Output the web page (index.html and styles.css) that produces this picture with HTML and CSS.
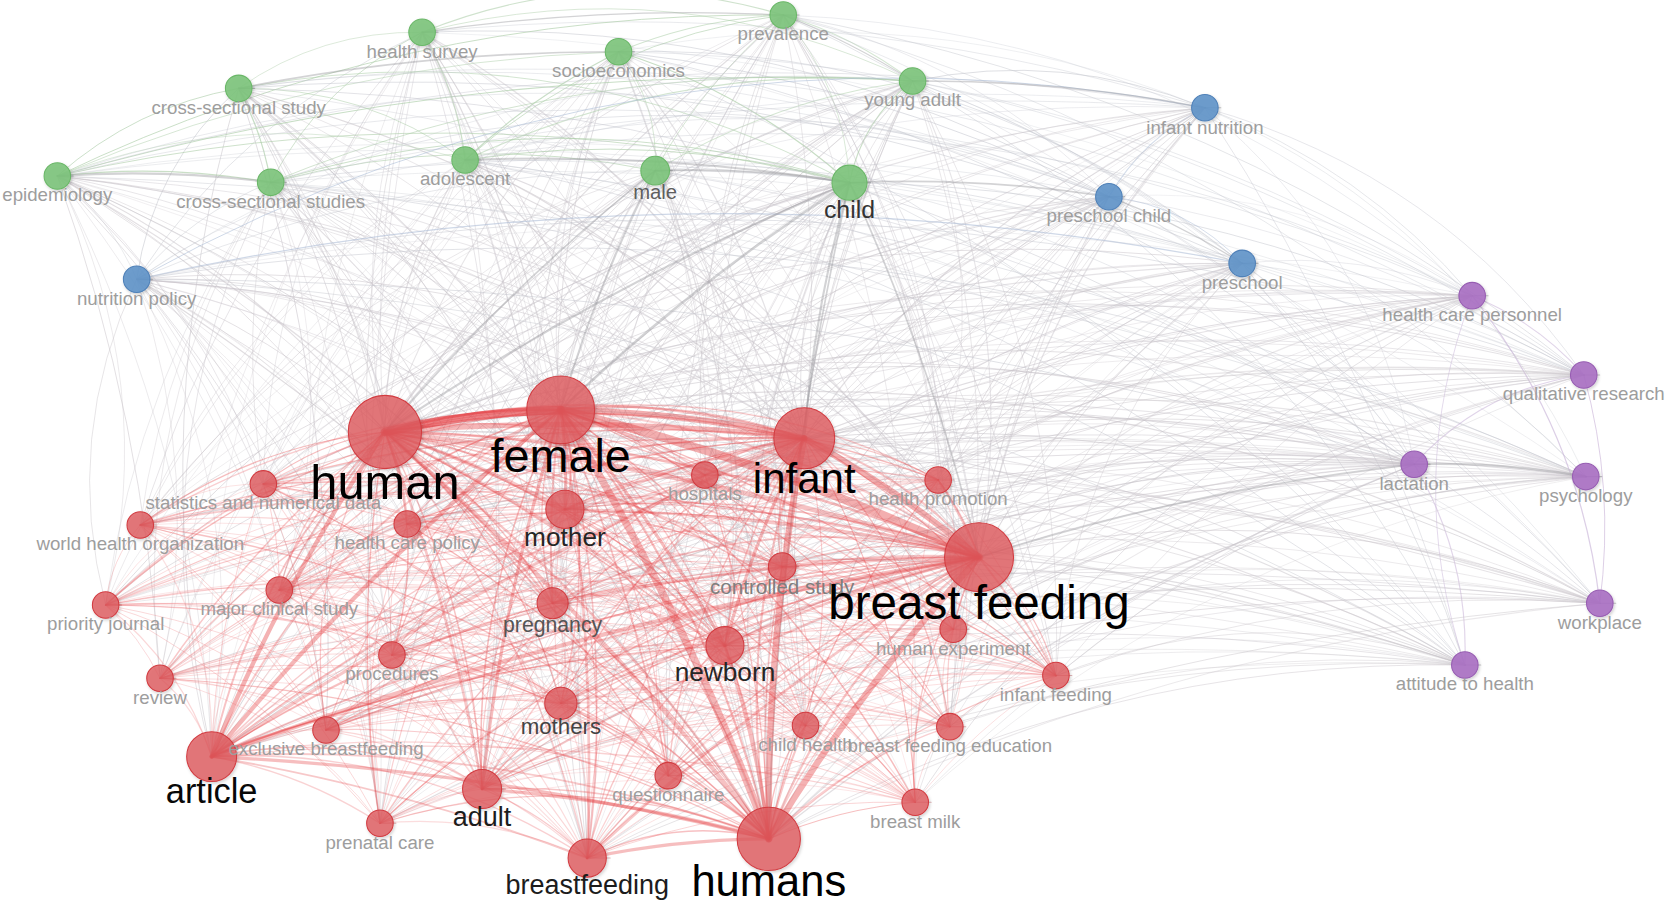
FILE: index.html
```html
<!DOCTYPE html>
<html lang="en">
<head>
<meta charset="utf-8">
<title>Co-occurrence network</title>
<link rel="stylesheet" href="styles.css">
</head>
<body>
<svg class="canvas" id="net" viewBox="0 0 1568 847.5" width="1665" height="900" xmlns="http://www.w3.org/2000/svg">
  <defs>
    <filter id="sh" x="-30%" y="-30%" width="160%" height="160%">
      <feDropShadow dx="1" dy="1.5" stdDeviation="1.4" flood-color="#000" flood-opacity="0.2"/>
    </filter>
  </defs>
  <g class="edges gray" id="e-gray"></g>
  <g class="edges red" id="e-red"></g>
  <g class="edges thick" id="e-thick"></g>
  <g id="nodes">
    <circle class="node g" data-id="hsurvey" data-c="g" cx="397.5" cy="30.4" r="12.5"/>
    <circle class="node g" data-id="prevalence" data-c="g" cx="737.6" cy="14.1" r="12.5"/>
    <circle class="node g" data-id="socio" data-c="g" cx="582.5" cy="48.7" r="12.5"/>
    <circle class="node g" data-id="cssy" data-c="g" cx="224.8" cy="83.2" r="12.5"/>
    <circle class="node g" data-id="yadult" data-c="g" cx="859.4" cy="76.3" r="12.5"/>
    <circle class="node g" data-id="epi" data-c="g" cx="54" cy="165.7" r="12.5"/>
    <circle class="node g" data-id="cssies" data-c="g" cx="254.9" cy="171.7" r="12.5"/>
    <circle class="node g" data-id="adolescent" data-c="g" cx="438" cy="150.7" r="12.5"/>
    <circle class="node g" data-id="male" data-c="g" cx="617" cy="160.7" r="13.5"/>
    <circle class="node g" data-id="child" data-c="g" cx="800" cy="172" r="16.5"/>

    <circle class="node b" data-id="infnut" data-c="b" cx="1134.7" cy="101.4" r="12.5"/>
    <circle class="node b" data-id="prechild" data-c="b" cx="1044.3" cy="185.2" r="12.5"/>
    <circle class="node b" data-id="preschool" data-c="b" cx="1169.8" cy="248" r="12.5"/>
    <circle class="node b" data-id="nutpol" data-c="b" cx="128.7" cy="263" r="12.5"/>

    <circle class="node p" data-id="hcpers" data-c="p" cx="1386.4" cy="278.4" r="12.5"/>
    <circle class="node p" data-id="qual" data-c="p" cx="1491.5" cy="353.1" r="12.5"/>
    <circle class="node p" data-id="lact" data-c="p" cx="1331.8" cy="437.2" r="12.5"/>
    <circle class="node p" data-id="psych" data-c="p" cx="1493.4" cy="448.8" r="12.5"/>
    <circle class="node p" data-id="work" data-c="p" cx="1506.6" cy="568.1" r="12.5"/>
    <circle class="node p" data-id="attit" data-c="p" cx="1379.5" cy="626.2" r="12.5"/>

    <circle class="node r" data-id="statdata" data-c="r" cx="248" cy="455.7" r="12.5"/>
    <circle class="node r" data-id="hcpol" data-c="r" cx="383.5" cy="493.4" r="12.5"/>
    <circle class="node r" data-id="who" data-c="r" cx="132.1" cy="494.4" r="12.5"/>
    <circle class="node r" data-id="mcs" data-c="r" cx="263" cy="555.6" r="12.5"/>
    <circle class="node r" data-id="pj" data-c="r" cx="99.5" cy="569.7" r="12.5"/>
    <circle class="node r" data-id="proc" data-c="r" cx="369.1" cy="616.8" r="12.5"/>
    <circle class="node r" data-id="review" data-c="r" cx="150.7" cy="638.7" r="12.5"/>
    <circle class="node r" data-id="hexp" data-c="r" cx="897.7" cy="592.6" r="12.5"/>
    <circle class="node r" data-id="inffeed" data-c="r" cx="994.4" cy="636.2" r="12.5"/>
    <circle class="node r" data-id="exbf" data-c="r" cx="307" cy="687.4" r="12.5"/>
    <circle class="node r" data-id="chealth" data-c="r" cx="758.6" cy="683.3" r="12.5"/>
    <circle class="node r" data-id="bfedu" data-c="r" cx="894.5" cy="684.3" r="12.5"/>
    <circle class="node r" data-id="quest" data-c="r" cx="629.3" cy="730.4" r="12.5"/>
    <circle class="node r" data-id="prenatal" data-c="r" cx="357.8" cy="775.3" r="12.5"/>
    <circle class="node r" data-id="bmilk" data-c="r" cx="861.9" cy="755.5" r="12.5"/>
    <circle class="node r" data-id="hospitals" data-c="r" cx="663.8" cy="447.3" r="12.5"/>
    <circle class="node r" data-id="hpromo" data-c="r" cx="883.5" cy="452" r="12.5"/>
    <circle class="node r" data-id="cstudy" data-c="r" cx="736.6" cy="533.6" r="13"/>
    <circle class="node r" data-id="pregnancy" data-c="r" cx="520.4" cy="568" r="14.6"/>
    <circle class="node r" data-id="mothers" data-c="r" cx="528.2" cy="662.3" r="15.2"/>
    <circle class="node r" data-id="bfeeding" data-c="r" cx="553" cy="808" r="18"/>
    <circle class="node r" data-id="newborn" data-c="r" cx="682.7" cy="608" r="17.9"/>
    <circle class="node r" data-id="mother" data-c="r" cx="532" cy="479.6" r="18"/>
    <circle class="node r" data-id="adult" data-c="r" cx="454" cy="743" r="18.4"/>
    <circle class="node r" data-id="article" data-c="r" cx="199.3" cy="712.5" r="23.5"/>
    <circle class="node r" data-id="humans" data-c="r" cx="724" cy="790" r="29.8"/>
    <circle class="node r" data-id="infant" data-c="r" cx="757.4" cy="412.7" r="28.7"/>
    <circle class="node r" data-id="female" data-c="r" cx="528" cy="386" r="32"/>
    <circle class="node r" data-id="bf" data-c="r" cx="922" cy="524.8" r="32.5"/>
    <circle class="node r" data-id="human" data-c="r" cx="362.5" cy="406.8" r="34.5"/>
  </g>
  <g class="labels">
    <text class="lb s" x="397.5" y="54.3">health survey</text>
    <text class="lb s" x="737.6" y="38">prevalence</text>
    <text class="lb s" x="582.5" y="72.6">socioeconomics</text>
    <text class="lb s" x="224.8" y="107.1">cross-sectional study</text>
    <text class="lb s" x="859.4" y="100.2">young adult</text>
    <text class="lb s" x="54" y="189.6">epidemiology</text>
    <text class="lb s" x="254.9" y="195.6">cross-sectional studies</text>
    <text class="lb s" x="438" y="174.6">adolescent</text>
    <text class="lb m1" x="617" y="187.5">male</text>
    <text class="lb m4" x="800" y="205">child</text>

    <text class="lb s" x="1134.7" y="125.8">infant nutrition</text>
    <text class="lb s" x="1044.3" y="209.1">preschool child</text>
    <text class="lb s" x="1169.8" y="272">preschool</text>
    <text class="lb s" x="128.7" y="286.9">nutrition policy</text>

    <text class="lb s" x="1386.4" y="302.3">health care personnel</text>
    <text class="lb s" x="1491.5" y="377">qualitative research</text>
    <text class="lb s" x="1331.8" y="461.1">lactation</text>
    <text class="lb s" x="1493.4" y="472.7">psychology</text>
    <text class="lb s" x="1506.6" y="592">workplace</text>
    <text class="lb s" x="1379.5" y="650.1">attitude to health</text>

    <text class="lb s" x="248" y="479.6">statistics and numerical data</text>
    <text class="lb s" x="383.5" y="517.3">health care policy</text>
    <text class="lb s" x="132.1" y="518.3">world health organization</text>
    <text class="lb s" x="263" y="579.5">major clinical study</text>
    <text class="lb s" x="99.5" y="593.6">priority journal</text>
    <text class="lb s" x="369.1" y="640.7">procedures</text>
    <text class="lb s" x="150.7" y="662.6">review</text>
    <text class="lb s" x="897.7" y="616.5">human experiment</text>
    <text class="lb s" x="994.4" y="660.1">infant feeding</text>
    <text class="lb s" x="307" y="711.3">exclusive breastfeeding</text>
    <text class="lb s" x="758.6" y="707.2">child health</text>
    <text class="lb s" x="894.5" y="708.2">breast feeding education</text>
    <text class="lb s" x="629.3" y="754.3">questionnaire</text>
    <text class="lb s" x="357.8" y="799.2">prenatal care</text>
    <text class="lb s" x="861.9" y="779.4">breast milk</text>
    <text class="lb s" x="663.8" y="471.2">hospitals</text>
    <text class="lb s" x="883.5" y="475.9">health promotion</text>
    <text class="lb s2" x="736.6" y="559">controlled study</text>
    <text class="lb m2" x="520.4" y="595.5">pregnancy</text>
    <text class="lb m3" x="528.2" y="690.8">mothers</text>
    <text class="lb m6" x="553" y="842">breastfeeding</text>
    <text class="lb m5" x="682.7" y="641.3">newborn</text>
    <text class="lb m5" x="532" y="514.5">mother</text>
    <text class="lb m6" x="454" y="778">adult</text>
    <text class="lb l1" x="199.3" y="756">article</text>
    <text class="lb l3" x="724" y="843.5">humans</text>
    <text class="lb l2" x="757.4" y="464.5">infant</text>
    <text class="lb l4" x="528" y="444.5">female</text>
    <text class="lb l5" x="922" y="583">breast feeding</text>
    <text class="lb l6" x="362.5" y="469.5">human</text>
  </g>
</svg>
<script src="script.js"></script>
</body>
</html>
```
FILE: styles.css
```css
html, body {
  margin: 0;
  padding: 0;
  background: #ffffff;
  overflow: hidden;
}
.canvas {
  display: block;
  width: 1665px;
  height: 900px;
}
.edges path {
  fill: none;
  stroke-linecap: round;
}
.node {
  stroke-width: 1;
  filter: url(#sh);
}
.node.r { fill: #df5a5e; fill-opacity: 0.8; stroke: #d23c41; }
.node.g { fill: #7dc47b; fill-opacity: 0.9; stroke: #6ab768; }
.node.b { fill: #6093c9; fill-opacity: 0.9; stroke: #4f81b8; }
.node.p { fill: #aa70c3; fill-opacity: 0.9; stroke: #975db2; }

.lb {
  font-family: "Liberation Sans", Arial, sans-serif;
  text-anchor: middle;
}
.s  { font-size: 17.6px; fill: #9d9d9d; }
.s2 { font-size: 19.4px; fill: #7e7e7e; }
.m1 { font-size: 19.1px; fill: #5e5e5e; }
.m2 { font-size: 20px;   fill: #555555; }
.m3 { font-size: 21px;   fill: #444444; }
.m4 { font-size: 23.4px; fill: #333333; }
.m5 { font-size: 24.7px; fill: #262626; }
.m6 { font-size: 25.4px; fill: #1c1c1c; }
.l1 { font-size: 32.4px; fill: #080808; }
.l2 { font-size: 39.6px; fill: #000000; }
.l3 { font-size: 41px;   fill: #000000; }
.l4 { font-size: 44px;   fill: #000000; }
.l5 { font-size: 44.8px; fill: #000000; }
.l6 { font-size: 46px;   fill: #000000; }
```
FILE: script.js
```js
(function () {
  var NS = 'http://www.w3.org/2000/svg';
  var list = document.querySelectorAll('#nodes .node');
  var N = [], byId = {};
  for (var i = 0; i < list.length; i++) {
    var c = list[i];
    var n = {
      id: c.getAttribute('data-id'),
      x: +c.getAttribute('cx'),
      y: +c.getAttribute('cy'),
      r: +c.getAttribute('r'),
      c: c.getAttribute('data-c')
    };
    N.push(n);
    byId[n.id] = n;
  }
  var seed = 987654321;
  function rnd() {
    seed = (Math.imul(seed, 1664525) + 1013904223) >>> 0;
    return seed / 4294967296;
  }
  var gGray = document.getElementById('e-gray');
  var gRed = document.getElementById('e-red');
  var gThick = document.getElementById('e-thick');

  function edge(a, b, w, col, op, layer, bend) {
    if (a.x > b.x) { var t = a; a = b; b = t; }
    var dx = b.x - a.x, dy = b.y - a.y;
    var len = Math.sqrt(dx * dx + dy * dy) || 1;
    var k = bend * len;
    var mx = (a.x + b.x) / 2 + (dy / len) * k;
    var my = (a.y + b.y) / 2 - (dx / len) * k;
    var p = document.createElementNS(NS, 'path');
    p.setAttribute('d', 'M' + a.x.toFixed(1) + ' ' + a.y.toFixed(1) +
      ' Q' + mx.toFixed(1) + ' ' + my.toFixed(1) + ' ' + b.x.toFixed(1) + ' ' + b.y.toFixed(1));
    p.setAttribute('stroke', col);
    p.setAttribute('stroke-width', w.toFixed(2));
    p.setAttribute('stroke-opacity', op.toFixed(2));
    layer.appendChild(p);
  }

  var tint = {
    g: 'rgb(172,205,168)',
    b: 'rgb(172,188,214)',
    p: 'rgb(198,176,214)'
  };

  for (var i = 0; i < N.length; i++) {
    for (var j = i + 1; j < N.length; j++) {
      var a = N[i], b = N[j];
      var s = a.r + b.r;
      var bothRed = a.c === 'r' && b.c === 'r';
      var p = (bothRed ? 0.78 : 0.62) + (s - 25) * 0.02;
      if (rnd() > p) continue;
      var bend = 0.07 + rnd() * 0.12;
      if (bothRed) {
        var w = 0.5 + (a.r * b.r) / 700 + rnd() * 0.35;
        var strong = (a.r * b.r) > 300;
        edge(a, b, w, strong ? 'rgb(232,84,88)' : 'rgb(238,118,122)', (strong ? 0.27 : 0.2) + rnd() * 0.13, gRed, bend);
      } else if (a.c === b.c) {
        edge(a, b, 0.7 + rnd() * 0.5, tint[a.c], 0.5 + rnd() * 0.2, gGray, bend);
      } else {
        var col = (a.c === 'r' || b.c === 'r') ? 'rgb(200,195,201)' : 'rgb(195,197,205)';
        edge(a, b, 0.55 + rnd() * 0.4 + (s > 40 ? 0.3 : 0), col, 0.36 + rnd() * 0.22, gGray, bend);
      }
    }
  }

  var thick = [
    ['human', 'female', 8, 0.62], ['human', 'infant', 5, 0.36], ['female', 'infant', 6, 0.4],
    ['female', 'bf', 8, 0.4], ['infant', 'bf', 6, 0.4], ['human', 'bf', 4.5, 0.3],
    ['female', 'humans', 7, 0.36], ['infant', 'humans', 6, 0.38], ['bf', 'humans', 6, 0.38],
    ['human', 'humans', 4, 0.3], ['article', 'human', 4, 0.38], ['article', 'female', 4, 0.36],
    ['article', 'bf', 4, 0.32], ['article', 'humans', 3, 0.32], ['article', 'infant', 3, 0.27],
    ['mother', 'female', 3, 0.32], ['mother', 'human', 2.5, 0.27], ['mother', 'infant', 2.5, 0.27],
    ['mother', 'bf', 2.5, 0.27], ['newborn', 'female', 3, 0.32], ['newborn', 'infant', 3, 0.32],
    ['newborn', 'humans', 3, 0.32], ['newborn', 'bf', 2.5, 0.27], ['newborn', 'human', 2.5, 0.27],
    ['adult', 'female', 3, 0.32], ['adult', 'humans', 3, 0.32], ['adult', 'human', 2.5, 0.27],
    ['adult', 'bf', 2, 0.27], ['bfeeding', 'humans', 3, 0.32], ['bfeeding', 'female', 2.5, 0.27],
    ['bfeeding', 'bf', 2.5, 0.27], ['mothers', 'bf', 2, 0.27], ['pregnancy', 'female', 2, 0.27],
    ['pregnancy', 'human', 2, 0.27], ['pregnancy', 'bf', 2.5, 0.27], ['chealth', 'humans', 2, 0.27],
    ['hospitals', 'female', 2, 0.27], ['cstudy', 'bf', 2, 0.27], ['cstudy', 'human', 2, 0.25],
    ['mcs', 'human', 1.6, 0.27], ['exbf', 'bf', 1.8, 0.27], ['bfeeding', 'article', 1.8, 0.27],
    ['hpromo', 'bf', 2, 0.27], ['inffeed', 'bf', 1.8, 0.27], ['quest', 'female', 1.6, 0.27]
  ];
  thick.forEach(function (t) {
    var a = byId[t[0]], b = byId[t[1]];
    if (a && b) edge(a, b, t[2], 'rgb(226,52,56)', t[3], gThick, 0.05);
  });

  var grayThick = [
    ['child', 'female', 2.4], ['child', 'human', 2], ['child', 'infant', 2], ['child', 'bf', 1.6],
    ['child', 'humans', 1.6], ['male', 'female', 1.8], ['male', 'human', 1.6],
    ['epi', 'cssies', 2], ['cssy', 'socio', 1.6], ['adolescent', 'child', 1.8], ['male', 'child', 1.8],
    ['lact', 'psych', 2], ['lact', 'bf', 1.6], ['infnut', 'yadult', 1.4], ['prechild', 'child', 1.6],
    ['preschool', 'prechild', 1.2], ['prevalence', 'hsurvey', 1.2], ['prevalence', 'yadult', 1.2]
  ];
  grayThick.forEach(function (t) {
    var a = byId[t[0]], b = byId[t[1]];
    if (a && b) edge(a, b, t[2], 'rgb(150,150,156)', 0.42, gGray, 0.05);
  });

  N.forEach(function (n) {
    if (n.r > 20) return;
    var col = n.c === 'r' ? 'rgb(170,40,45)' : 'rgb(90,90,95)';
    var p = document.createElementNS(NS, 'path');
    p.setAttribute('d', 'M' + n.x.toFixed(1) + ' ' + n.y.toFixed(1) + ' l' + (n.r * 1.2).toFixed(1) + ' 0');
    p.setAttribute('stroke', col);
    p.setAttribute('stroke-width', '1');
    p.setAttribute('stroke-opacity', '0.35');
    gThick.appendChild(p);
  });
})();
```
